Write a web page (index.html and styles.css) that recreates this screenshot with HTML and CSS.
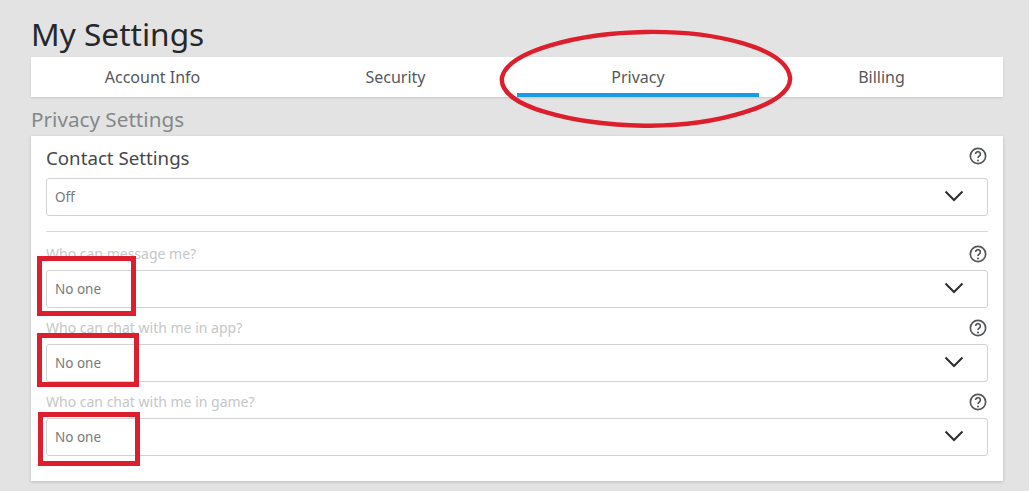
FILE: index.html
```html
<!DOCTYPE html>
<html lang="en">
<head>
    <meta charset="UTF-8">
    <title>My Settings</title>
    <link rel="stylesheet" href="styles.css">
</head>
<body>
    <div class="container">
        <h1>My Settings</h1>
        <div class="tabs">
            <div class="tab">Account Info</div>
            <div class="tab">Security</div>
            <div class="tab active">Privacy</div>
            <div class="tab">Billing</div>
        </div>
        <h2>Privacy Settings</h2>
        <div class="card">
            <div class="row-head">
                <h3>Contact Settings</h3>
                <svg class="help" viewBox="0 0 16 16"><circle cx="8" cy="8" r="6.8"/><path d="M5.9 6.2a2.1 2.1 0 1 1 3.3 1.8c-.8.5-1.2.9-1.2 1.8"/><circle class="dot" cx="8" cy="11.9" r=".9"/></svg>
            </div>
            <div class="select">
                <span>Off</span>
                <svg class="chevron" viewBox="0 0 20 12"><path d="M1.5 1.5 10 10l8.5-8.5"/></svg>
            </div>
            <hr>
            <div class="row-head label-row first">
                <label>Who can message me?</label>
                <svg class="help" viewBox="0 0 16 16"><circle cx="8" cy="8" r="6.8"/><path d="M5.9 6.2a2.1 2.1 0 1 1 3.3 1.8c-.8.5-1.2.9-1.2 1.8"/><circle class="dot" cx="8" cy="11.9" r=".9"/></svg>
            </div>
            <div class="select">
                <span>No one</span>
                <svg class="chevron" viewBox="0 0 20 12"><path d="M1.5 1.5 10 10l8.5-8.5"/></svg>
            </div>
            <div class="row-head label-row">
                <label>Who can chat with me in app?</label>
                <svg class="help" viewBox="0 0 16 16"><circle cx="8" cy="8" r="6.8"/><path d="M5.9 6.2a2.1 2.1 0 1 1 3.3 1.8c-.8.5-1.2.9-1.2 1.8"/><circle class="dot" cx="8" cy="11.9" r=".9"/></svg>
            </div>
            <div class="select">
                <span>No one</span>
                <svg class="chevron" viewBox="0 0 20 12"><path d="M1.5 1.5 10 10l8.5-8.5"/></svg>
            </div>
            <div class="row-head label-row">
                <label>Who can chat with me in game?</label>
                <svg class="help" viewBox="0 0 16 16"><circle cx="8" cy="8" r="6.8"/><path d="M5.9 6.2a2.1 2.1 0 1 1 3.3 1.8c-.8.5-1.2.9-1.2 1.8"/><circle class="dot" cx="8" cy="11.9" r=".9"/></svg>
            </div>
            <div class="select">
                <span>No one</span>
                <svg class="chevron" viewBox="0 0 20 12"><path d="M1.5 1.5 10 10l8.5-8.5"/></svg>
            </div>
        </div>
    </div>

    <!-- red annotations drawn over the screenshot -->
    <svg class="ellipse" viewBox="0 0 300 104"><path d="M4 50C10 24 80 5 150 4c70-1 142 16 146 46 3 28-76 50-148 49C78 98 0 80 4 50Z"/></svg>
    <div class="mark mark-1"></div>
    <div class="mark mark-2"></div>
    <div class="mark mark-3"></div>
</body>
</html>
```

FILE: styles.css
```css
html, body {
    height: 491px;
    overflow: hidden;
}

body {
    font-family: "Noto Sans", Arial, sans-serif;
    background-color: #e3e3e3;
    margin: 0;
    position: relative;
}

.container {
    width: 972px;
    margin-left: 31px;
    padding-top: 13px;
}

h1 {
    font-size: 31.6px;
    font-weight: 400;
    line-height: 42px;
    color: #25282b;
    margin: 0 0 2px;
}

.tabs {
    display: grid;
    grid-template-columns: repeat(4, 1fr);
    height: 40px;
    background: white;
    box-shadow: 0 1px 2px rgba(0, 0, 0, 0.12);
}

.tab {
    font-size: 16px;
    line-height: 40px;
    text-align: center;
    color: #55585b;
}

.tab.active {
    border-bottom: 4px solid #1a9be6;
    height: 40px;
    box-sizing: border-box;
    margin-right: 1px;
}

h2 {
    font-size: 20.7px;
    font-weight: 400;
    line-height: 45px;
    color: #85888b;
    margin: 0;
    height: 39px;
}

.card {
    height: 345px;
    box-sizing: border-box;
    background: white;
    padding: 0 15px;
    box-shadow: 0 1px 3px rgba(0, 0, 0, 0.18);
}

.row-head {
    display: flex;
    justify-content: space-between;
    align-items: center;
    padding-right: 1px;
}

.row-head:first-child {
    height: 42px;
}

.label-row {
    height: 36px;
    align-items: flex-end;
    padding-bottom: 7px;
    box-sizing: border-box;
}

.label-row.first {
    height: 38px;
}

h3 {
    font-size: 18.7px;
    font-weight: 400;
    color: #45484b;
    margin: 0;
}

label {
    font-size: 14px;
    color: #c5c7c9;
}

.help {
    width: 18px;
    height: 18px;
    fill: none;
    stroke: #54575a;
    stroke-width: 1.5;
}

.row-head:first-child .help {
    margin-top: -2px;
}

.help .dot {
    fill: #54575a;
    stroke: none;
}

.select {
    display: flex;
    justify-content: space-between;
    align-items: center;
    height: 38px;
    box-sizing: border-box;
    border: 1px solid #d0d2d4;
    border-radius: 3px;
    padding: 0 23px 2px 8px;
    font-size: 13.5px;
    color: #777a7d;
}

.select span {
    margin-top: 2px;
}

.chevron {
    width: 20px;
    height: 12px;
    fill: none;
    stroke: #2b2d30;
    stroke-width: 2;
}

hr {
    border: none;
    border-top: 1px solid #d8d9da;
    margin: 15px 0 0;
}

.ellipse {
    position: absolute;
    left: 498px;
    top: 28px;
    width: 296px;
    height: 102.6px;
    fill: none;
    stroke: #dd1f2d;
    stroke-width: 4.5;
}

.mark {
    position: absolute;
    box-sizing: border-box;
    border: 5px solid #dd1f2d;
}

.mark-1 {
    left: 37px;
    top: 256px;
    width: 99px;
    height: 60px;
}

.mark-2 {
    left: 37px;
    top: 333px;
    width: 102px;
    height: 54px;
}

.mark-3 {
    left: 38px;
    top: 412px;
    width: 102px;
    height: 54px;
}
```
